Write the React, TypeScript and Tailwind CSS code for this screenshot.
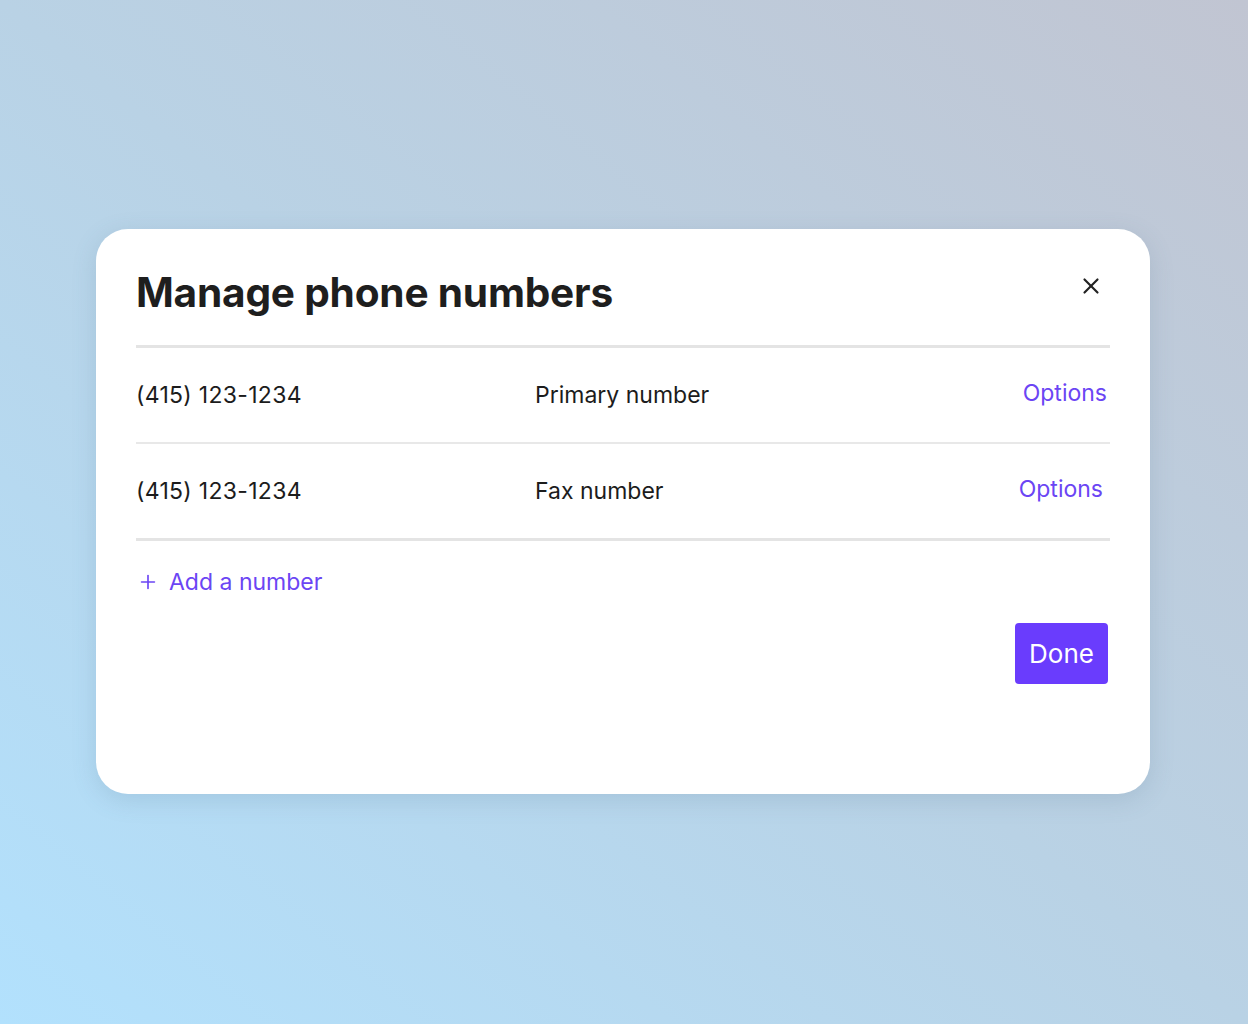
import React from 'react'
import { X, Plus } from 'lucide-react'

const numbers = [
  { phone: '(415) 123-1234', label: 'Primary number', nudge: 'pr-[3px]' },
  { phone: '(415) 123-1234', label: 'Fax number', nudge: 'pr-[7px]' },
]

export default function App() {
  return (
    <div
      className="min-h-screen w-full bg-gradient-to-tr from-[#b2e1fd] via-[#b9d2e5] to-[#c1c5d2] pt-[229px]"
      style={{ fontFamily: 'Inter, "Noto Sans", sans-serif' }}
    >
      <div className="ml-[96px] mr-[98px] h-[565px] rounded-[32px] bg-white px-[40px] pt-[38px] shadow-[0_6px_24px_rgba(80,110,140,0.18)]">
        {/* Header */}
        <div className="flex items-start justify-between">
          <h1 className="text-[40.6px] font-bold leading-[52px] tracking-[-0.2px] text-[#1e1e1e]">
            Manage phone numbers
          </h1>
          <button className="mr-[6px] mt-[6px] text-[#222]">
            <X className="h-[26px] w-[26px]" strokeWidth={2} />
          </button>
        </div>
        <div className="mt-[26px] h-[3px] bg-[#e4e4e4]" />

        {/* Rows */}
        {numbers.map((n, i) => (
          <div key={i}>
            <div className="flex h-[94px] items-center text-[23px] text-[#1c1c1c]">
              <span className="w-[399px] tracking-[0.3px]">{n.phone}</span>
              <span className="flex-1">{n.label}</span>
              <button className={`mb-[4px] text-[#6b45f4] ${n.nudge}`}>Options</button>
            </div>
            <div className={i === 0 ? 'h-[2px] bg-[#e8e8e8]' : 'h-[3px] bg-[#e4e4e4]'} />
          </div>
        ))}

        {/* Add */}
        <button className="mt-[24px] flex items-center gap-[10px] pl-[1px] text-[23px] text-[#6b45f4]">
          <Plus className="h-[22px] w-[22px]" strokeWidth={1.8} />
          Add a number
        </button>

        <div className="mt-[23px] flex justify-end pr-[2px]">
          <button className="h-[61px] w-[93px] rounded-[4px] bg-[#6a3cfd] text-[26px] text-white">
            Done
          </button>
        </div>
      </div>
    </div>
  )
}
